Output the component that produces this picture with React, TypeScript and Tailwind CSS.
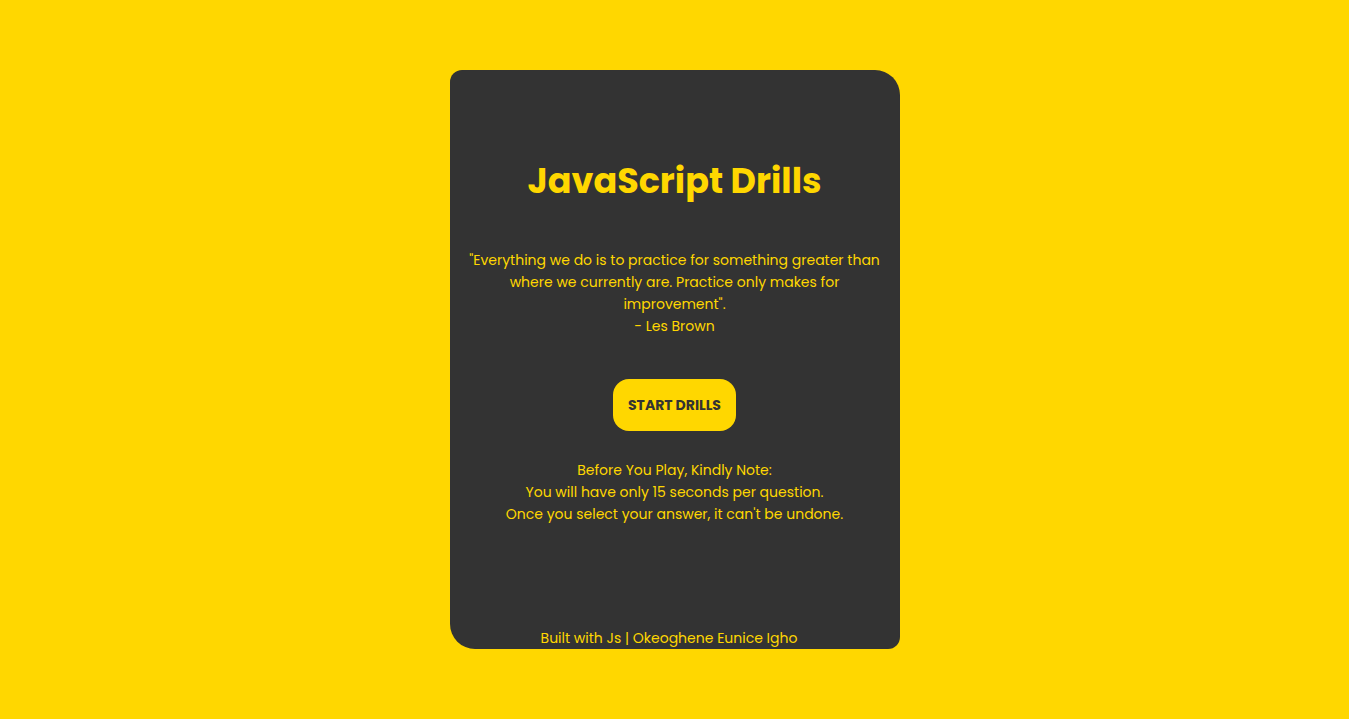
export default function App() {
	return (
		<div
			className="min-h-[719px] w-full bg-[#ffd700] pt-[70px]"
			style={{ fontFamily: "Poppins, 'Open Sans', 'Noto Sans', sans-serif" }}
		>
			<div className="mx-auto flex h-[579px] w-[450px] flex-col items-center rounded-tl-[12px] rounded-tr-[25px] rounded-bl-[25px] rounded-br-[12px] bg-[#333333] pt-[84px] text-[#ffd700]">
				<h1 className="text-[35px] font-bold leading-[54px]">JavaScript Drills</h1>
				<p className="mt-[41px] px-[19px] text-center text-[14px] leading-[22px]">
					"Everything we do is to practice for something greater than where we currently are. Practice only makes for improvement".
					<br />- Les Brown
				</p>
				<button className="mt-[42px] h-[52px] rounded-[16px] bg-[#ffd700] px-[15px] text-[14px] font-bold text-[#333333]">
					START DRILLS
				</button>
				<div className="mt-[28px] text-center text-[14px] leading-[22px]">
					<p>Before You Play, Kindly Note:</p>
					<p>You will have only 15 seconds per question.</p>
					<p>Once you select your answer, it can't be undone.</p>
				</div>
				<footer className="mt-auto pr-[11px] text-[14px] leading-[22px]">Built with Js | Okeoghene Eunice Igho</footer>
			</div>
		</div>
	);
}
